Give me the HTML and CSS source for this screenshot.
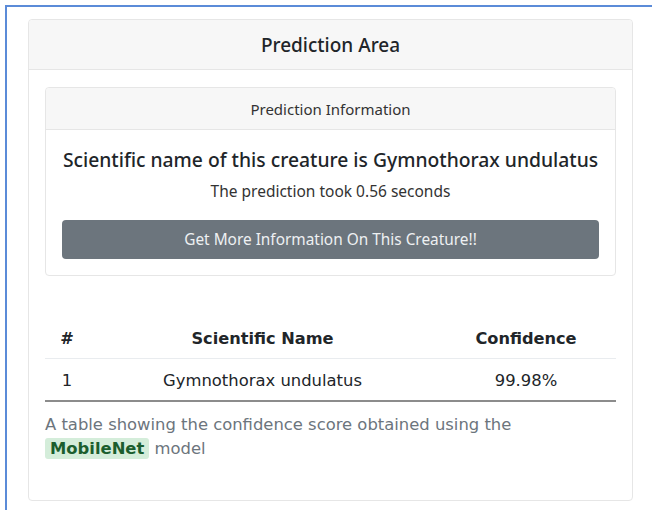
FILE: index.html
```html
<!DOCTYPE html>
<html lang="en">
<head>
<meta charset="utf-8">
<title>Prediction Area</title>
<link rel="stylesheet" href="styles.css">
</head>
<body>
<div class="frame">
  <section class="card">
    <header class="card-header">Prediction Area</header>
    <div class="card-body">
      <div class="info-card">
        <div class="info-header">Prediction Information</div>
        <div class="info-body">
          <h5 class="info-title">Scientific name of this creature is Gymnothorax undulatus</h5>
          <p class="info-time">The prediction took 0.56 seconds</p>
          <button class="btn-more" type="button">Get More Information On This Creature!!</button>
        </div>
      </div>

      <table class="results">
        <thead>
          <tr>
            <th class="col-num">#</th>
            <th class="col-name">Scientific Name</th>
            <th class="col-conf">Confidence</th>
          </tr>
        </thead>
        <tbody>
          <tr>
            <td>1</td>
            <td>Gymnothorax undulatus</td>
            <td>99.98%</td>
          </tr>
        </tbody>
      </table>
      <p class="caption">A table showing the confidence score obtained using the <span class="badge">MobileNet</span> model</p>
    </div>
  </section>
</div>
</body>
</html>
```

FILE: styles.css
```css
html, body {
  margin: 0;
  padding: 0;
  background: #ffffff;
}

body {
  width: 652px;
  height: 512px;
  overflow: hidden;
  font-family: "Noto Sans", "Open Sans", sans-serif;
  color: #212529;
}

.frame {
  margin: 5px 0 0 5px;
  border-top: 2px solid #5b8bd8;
  border-left: 2px solid #5b8bd8;
  height: 505px;
  box-sizing: border-box;
  padding: 12px 0 0 21px;
}

.card {
  width: 605px;
  box-sizing: border-box;
  border: 1px solid #e6e6e6;
  border-radius: 4px;
  background: #fff;
}

.card-header {
  height: 49px;
  display: flex;
  align-items: center;
  justify-content: center;
  background: #f7f7f7;
  border-bottom: 1px solid #e6e6e6;
  border-radius: 4px 4px 0 0;
  font-size: 19px;
  font-weight: 500;
}

.card-body {
  padding: 17px 16px 0 16px;
  height: 413px;
}

.info-card {
  border: 1px solid #e6e6e6;
  border-radius: 4px;
}

.info-header {
  height: 41px;
  display: flex;
  align-items: center;
  justify-content: center;
  background: #f7f7f7;
  border-bottom: 1px solid #e6e6e6;
  border-radius: 4px 4px 0 0;
  font-size: 15px;
  color: #333;
}

.info-body {
  padding: 16px;
  text-align: center;
}

.info-title {
  margin: 0;
  font-size: 19.3px;
  line-height: 28px;
  font-weight: 500;
}

.info-time {
  margin: 6px 0 18px;
  font-size: 15.5px;
  line-height: 22px;
  color: #333;
}

.btn-more {
  display: block;
  width: 100%;
  height: 39px;
  border: none;
  border-radius: 4px;
  background: #6c757d;
  color: #eef0f2;
  font-family: inherit;
  font-size: 15.4px;
}

.results {
  width: 100%;
  margin-top: 41px;
  border-collapse: collapse;
  font-family: "DejaVu Sans", Verdana, sans-serif;
  font-size: 16.4px;
  color: #212529;
}

.results th,
.results td {
  text-align: center;
  padding: 2px 0 0;
  box-sizing: border-box;
}

.results th {
  height: 41px;
  font-weight: bold;
  font-size: 16.2px;
  border-bottom: 1px solid #e9ecef;
}

.results td {
  height: 43px;
}

.results tbody tr {
  border-bottom: 2px solid #8c8c8c;
}

.col-num { width: 44px; }
.col-conf { width: 180px; }

.caption {
  max-width: 500px;
  margin: 11px 0 0;
  font-family: "DejaVu Sans", Verdana, sans-serif;
  font-size: 16.4px;
  line-height: 24px;
  color: #6c757d;
}

.badge {
  display: inline-block;
  padding: 0 5px;
  line-height: 21px;
  border-radius: 3px;
  background: #d4edda;
  color: #1b5e2e;
  font-weight: bold;
}
```
